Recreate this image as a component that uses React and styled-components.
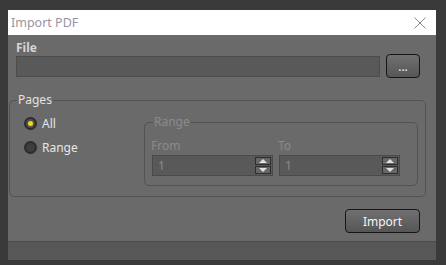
import React from 'react'
import styled, { createGlobalStyle } from 'styled-components'

const GlobalStyle = createGlobalStyle`
body {
  margin: 0;
  background: #3a3a3a;
  font-family: "Noto Sans", "Open Sans", sans-serif;
  font-size: 12px;
}
`

const Window = styled.div`
width: 428px;
margin: 10px 0 0 8px;
background: #6a6a6a;
display: flex;
flex-direction: column;
`

const TitleBar = styled.div`
height: 25px;
background: #ffffff;
display: flex;
align-items: center;
justify-content: space-between;
padding: 0 10px 0 3px;
`

const Title = styled.span`
font-size: 12.5px;
color: #9a92a2;
`

const Close = styled.svg`
width: 12px;
height: 12px;
`

const Body = styled.div`
height: 206px;
display: flex;
flex-direction: column;
`

const FileSection = styled.div`
padding: 7px 16px 0 8px;
`

const FileLabel = styled.div`
font-weight: bold;
color: #d6d6d6;
line-height: 12px;
height: 12px;
`

const FileRow = styled.div`
display: flex;
align-items: center;
gap: 6px;
height: 24px;
`

const Field = styled.div`
flex: 1;
height: 21px;
box-sizing: border-box;
border: 1px solid #4c4c4c;
background: #595959;
`

const Button = styled.button`
width: ${p => p.w}px;
height: ${p => p.h}px;
box-sizing: border-box;
border: 1px solid #161616;
border-radius: 4px;
background: linear-gradient(#707070, #565656);
color: #f4f4f4;
font-family: inherit;
font-size: 12px;
padding: 0;
`

const GroupBox = styled.fieldset`
margin: ${p => p.m};
padding: ${p => p.pad};
width: ${p => p.w || 'auto'};
box-sizing: border-box;
border: 1px solid #535353;
border-radius: 5px;
display: flex;
min-width: 0;
`

const Legend = styled.legend`
margin-left: ${p => p.ml}px;
padding: 0 1px;
line-height: 14px;
color: ${p => (p.disabled ? '#8a8a8a' : '#e4e4e4')};
`

const RadioList = styled.div`
display: flex;
flex-direction: column;
gap: 11px;
padding: 10px 0 0 14px;
width: 120px;
`

const RadioRow = styled.label`
display: flex;
align-items: center;
gap: 5px;
color: #e6e6e6;
line-height: 13px;
`

const RadioDot = styled.span`
width: 13px;
height: 13px;
box-sizing: border-box;
border-radius: 50%;
border: 2px solid #2c2c2c;
background: ${p => (p.on ? '#505050' : '#3e3e3e')};
display: flex;
align-items: center;
justify-content: center;
&::after {
  content: '';
  width: 5px;
  height: 5px;
  border-radius: 50%;
  background: ${p => (p.on ? '#f4d61e' : 'transparent')};
}
`

const RangeCols = styled.div`
display: flex;
gap: 6px;
`

const SpinCol = styled.div`
display: flex;
flex-direction: column;
gap: 2px;
`

const SpinLabel = styled.div`
color: #8a8a8a;
line-height: 14px;
margin-left: -1px;
`

const SpinBox = styled.div`
width: 121px;
height: 21px;
box-sizing: border-box;
border: 1px solid #4a4a4a;
background: #595959;
display: flex;
align-items: center;
justify-content: space-between;
padding: 0 1px 0 5px;
color: #8a8a8a;
`

const Arrows = styled.div`
display: flex;
flex-direction: column;
gap: 1px;
`

const Arrow = styled.div`
width: 16px;
height: 8px;
box-sizing: border-box;
border: 1px solid #2e2e2e;
background: #666;
display: flex;
align-items: center;
justify-content: center;
&::after {
  content: '';
  border-left: 4px solid transparent;
  border-right: 4px solid transparent;
  ${p => (p.up ? 'border-bottom: 4px solid #e0e0e0;' : 'border-top: 4px solid #e0e0e0;')}
}
`

const Footer = styled.div`
margin-top: auto;
display: flex;
justify-content: flex-end;
padding: 0 16px 8px 0;
`

const StatusBar = styled.div`
height: 18px;
border-top: 1px solid #4a4a4a;
background: #575757;
`

function Spin({ label }) {
  return (
    <SpinCol>
      <SpinLabel>{label}</SpinLabel>
      <SpinBox>
        1
        <Arrows>
          <Arrow up />
          <Arrow />
        </Arrows>
      </SpinBox>
    </SpinCol>
  )
}

export default function App() {
  return (
    <>
      <GlobalStyle />
      <Window>
        <TitleBar>
          <Title>Import PDF</Title>
          <Close viewBox="0 0 12 12">
            <path d="M0.5 0.5 L11.5 11.5 M11.5 0.5 L0.5 11.5" stroke="#8a8a8a" strokeWidth="1" fill="none" />
          </Close>
        </TitleBar>
        <Body>
          <FileSection>
            <FileLabel>File</FileLabel>
            <FileRow>
              <Field />
              <Button w={34} h={24}>...</Button>
            </FileRow>
          </FileSection>
          <GroupBox m="15px 10px 0 1px" pad="0 0 10px 0">
            <Legend ml={7}>Pages</Legend>
            <RadioList>
              <RadioRow><RadioDot on />All</RadioRow>
              <RadioRow><RadioDot />Range</RadioRow>
            </RadioList>
            <GroupBox m="8px 7px 0 auto" pad="10px 0 9px 7px" w="274px">
              <Legend ml={1} disabled>Range</Legend>
              <RangeCols>
                <Spin label="From" />
                <Spin label="To" />
              </RangeCols>
            </GroupBox>
          </GroupBox>
          <Footer>
            <Button w={75} h={24}>Import</Button>
          </Footer>
        </Body>
        <StatusBar />
      </Window>
    </>
  )
}
